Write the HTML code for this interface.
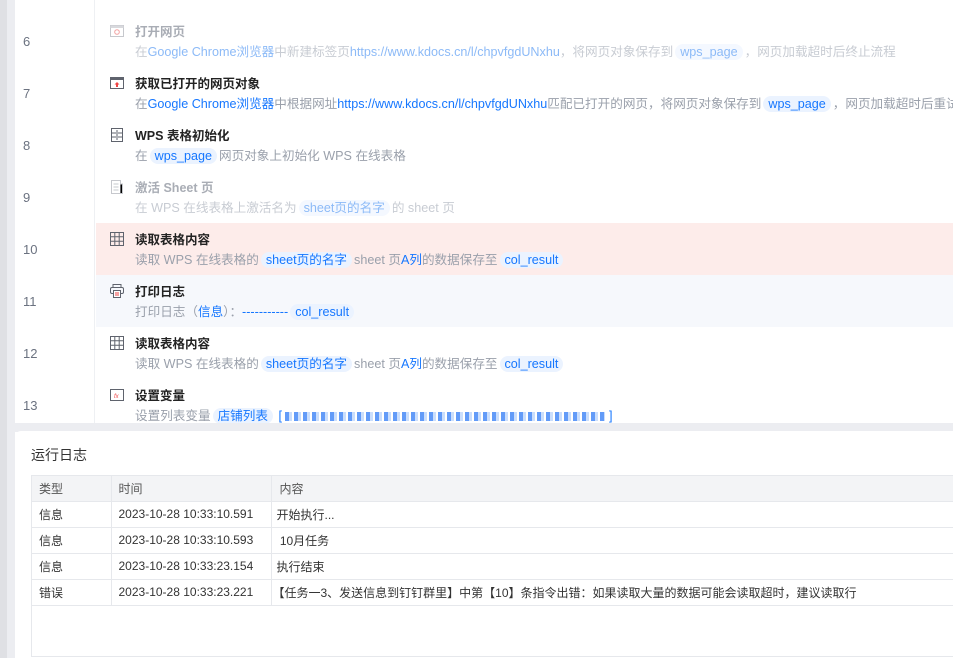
<!DOCTYPE html>
<html><head><meta charset="utf-8"><style>
*{margin:0;padding:0;box-sizing:border-box}
body{width:953px;height:658px;overflow:hidden;background:#fff;font-family:"Liberation Sans","Noto Sans CJK SC",sans-serif;position:relative}
.strip1{position:absolute;left:0;top:0;width:7px;height:658px;background:#dfe0e4}
.strip2{position:absolute;left:7px;top:0;width:8px;height:658px;background:#ecedf1}
.numcol{position:absolute;left:15px;top:0;width:80px;height:423px;background:#fff;border-right:1px solid #eef0f3}
.row{position:absolute;left:96px;width:857px;height:52px}
.num{position:absolute;left:23px;font-size:13px;color:#6b7280;width:40px}
.ic{position:absolute;left:14px;top:9px;width:14px;height:14px}
.t{position:absolute;left:39px;top:6px;font-size:12.5px;font-weight:bold;color:#222;white-space:nowrap}
.d{position:absolute;left:39px;top:26px;font-size:12.6px;color:#9aa0ab;white-space:nowrap}
.b{color:#1677ff}
.tag{background:#ebf3ff;color:#1677ff;border-radius:9px;padding:1px 5px;margin:0 2px}
.fade .t{color:#a9adb5}.fade .d{color:#c8ccd3}.fade .b{color:#8cbaf7}.fade .tag{color:#8cbaf7;background:#f4f8ff}
.gap{position:absolute;left:15px;top:423px;width:938px;height:9px;background:#ecedf1}
.card{position:absolute;left:15px;top:431px;width:938px;height:227px;background:#fff;border-top-left-radius:6px}
.card h3{position:absolute;left:16px;top:14px;font-size:14px;font-weight:normal;color:#333}
.tbl{position:absolute;left:16px;top:44px;width:940px;height:182px;border:1px solid #e6e8ec}
table{width:100%;border-collapse:collapse;font-size:12px;color:#333}
td{border-bottom:1px solid #e6e8ec;border-right:1px solid #e6e8ec;height:26px;padding:0 7px;white-space:nowrap}
tr.h td{background:#f3f4f6;color:#555;height:25px}
.blur{display:inline-block;height:9px;background:repeating-linear-gradient(90deg,#3b82f6 0 4px,#bcd5fb 4px 7px,#fff 7px 9px);vertical-align:middle;opacity:.8}
</style></head><body>
<div class="strip1"></div><div class="strip2"></div>
<div class="numcol"></div>

<div class="num" style="top:34px">6</div>
<div class="num" style="top:86px">7</div>
<div class="num" style="top:138px">8</div>
<div class="num" style="top:190px">9</div>
<div class="num" style="top:242px">10</div>
<div class="num" style="top:294px">11</div>
<div class="num" style="top:346px">12</div>
<div class="num" style="top:398px">13</div>

<div class="row fade" style="top:15px">
<svg class="ic" viewBox="0 0 14 14"><rect x="0.5" y="1.5" width="13" height="11" fill="none" stroke="#c6c8cd"/><rect x="0.5" y="1.5" width="13" height="2.5" fill="#d8d9dd"/><circle cx="7" cy="8" r="2.3" fill="none" stroke="#f2a3a3"/></svg>
<div class="t">打开网页</div>
<div class="d">在<span class="b">Google Chrome浏览器</span>中新建标签页<span class="b">https://www.kdocs.cn/l/chpvfgdUNxhu</span>，将网页对象保存到<span class="tag">wps_page</span>，网页加载超时后终止流程</div></div>

<div class="row" style="top:67px">
<svg class="ic" viewBox="0 0 14 14"><rect x="0.5" y="1.5" width="13" height="11" fill="none" stroke="#5f636d"/><rect x="0.5" y="1.5" width="13" height="2.5" fill="#5f636d"/><path d="M7 6l-2.5 2.5h1.5v2.5h2v-2.5h1.5z" fill="#ef4444"/></svg>
<div class="t">获取已打开的网页对象</div>
<div class="d">在<span class="b">Google Chrome浏览器</span>中根据网址<span class="b">https://www.kdocs.cn/l/chpvfgdUNxhu</span>匹配已打开的网页，将网页对象保存到<span class="tag">wps_page</span>，网页加载超时后重试</div></div>

<div class="row" style="top:119px">
<svg class="ic" viewBox="0 0 14 14"><rect x="1.5" y="0.5" width="11" height="13" fill="none" stroke="#5f636d"/><path d="M1.5 5h11M1.5 9h11M6 3h2M6 7h2M6 11h2" stroke="#5f636d"/></svg>
<div class="t">WPS 表格初始化</div>
<div class="d">在<span class="tag">wps_page</span>网页对象上初始化 WPS 在线表格</div></div>

<div class="row fade" style="top:171px">
<svg class="ic" viewBox="0 0 14 14"><rect x="1.5" y="0.5" width="9" height="13" fill="none" stroke="#c6c8cd"/><path d="M10.5 4h2v9.5h-2M3.5 4h5M3.5 7h5M3.5 10h5" stroke="#c6c8cd"/></svg>
<div class="t">激活 Sheet 页</div>
<div class="d">在 WPS 在线表格上激活名为<span class="tag">sheet页的名字</span>的 sheet 页</div></div>

<div class="row" style="top:223px;background:#fdecea">
<svg class="ic" viewBox="0 0 14 14"><rect x="0.5" y="0.5" width="13" height="13" fill="none" stroke="#5f636d"/><path d="M0.5 4.8h13M0.5 9.2h13M4.8 0.5v13M9.2 0.5v13" stroke="#5f636d"/></svg>
<div class="t">读取表格内容</div>
<div class="d">读取 WPS 在线表格的<span class="tag">sheet页的名字</span>sheet 页<span class="b">A列</span>的数据保存至<span class="tag">col_result</span></div></div>

<div class="row" style="top:275px;background:#f6f8fc">
<svg class="ic" viewBox="0 0 14 14"><rect x="3" y="0.5" width="8" height="3" fill="none" stroke="#5f636d"/><rect x="0.5" y="3.5" width="13" height="6" rx="1.5" fill="none" stroke="#5f636d"/><rect x="3.5" y="6.5" width="7" height="7" fill="#fff" stroke="#5f636d"/><path d="M5 9h4M5 11h4" stroke="#ef4444"/></svg>
<div class="t">打印日志</div>
<div class="d">打印日志（<span class="b">信息</span>）：<span style="color:#1677ff">-----------</span><span class="tag">col_result</span></div></div>

<div class="row" style="top:327px">
<svg class="ic" viewBox="0 0 14 14"><rect x="0.5" y="0.5" width="13" height="13" fill="none" stroke="#5f636d"/><path d="M0.5 4.8h13M0.5 9.2h13M4.8 0.5v13M9.2 0.5v13" stroke="#5f636d"/></svg>
<div class="t">读取表格内容</div>
<div class="d">读取 WPS 在线表格的<span class="tag">sheet页的名字</span>sheet 页<span class="b">A列</span>的数据保存至<span class="tag">col_result</span></div></div>

<div class="row" style="top:379px">
<svg class="ic" viewBox="0 0 14 14"><rect x="0.5" y="1.5" width="13" height="11" fill="none" stroke="#5f636d"/><text x="4" y="10" font-size="6" fill="#ef4444" font-style="italic">fx</text></svg>
<div class="t">设置变量</div>
<div class="d">设置列表变量<span class="tag">店铺列表</span>  <span class="b">[</span> <span class="blur" style="width:320px"></span> <span class="b">]</span></div></div>

<div class="gap"></div>
<div class="card"><h3>运行日志</h3>
<div class="tbl"><table>
<tr class="h"><td style="width:79px">类型</td><td style="width:160px">时间</td><td style="padding-left:8px">内容</td></tr>
<tr><td>信息</td><td>2023-10-28 10:33:10.591</td><td style="padding-left:5px">开始执行...</td></tr>
<tr><td>信息</td><td>2023-10-28 10:33:10.593</td><td style="padding-left:5px">&nbsp;10月任务</td></tr>
<tr><td>信息</td><td>2023-10-28 10:33:23.154</td><td style="padding-left:5px">执行结束</td></tr>
<tr><td>错误</td><td>2023-10-28 10:33:23.221</td><td style="padding-left:1px">【任务一3、发送信息到钉钉群里】中第【10】条指令出错：如果读取大量的数据可能会读取超时，建议读取行</td></tr>
</table></div></div>
</body></html>
